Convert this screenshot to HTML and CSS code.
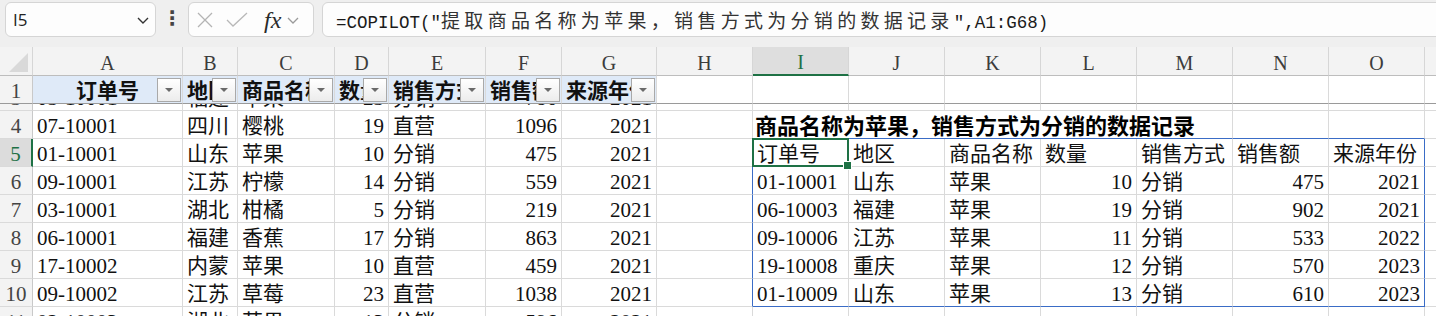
FILE: index.html
```html
<!DOCTYPE html>
<html lang="zh-CN">
  <head>
    <meta charset="UTF-8" />
    <meta name="viewport" content="width=device-width, initial-scale=1.0" />

    <title>COPILOT 筛选</title>

    <link rel="stylesheet" href="styles.css">
  </head>
  <body>
    <!-- formula bar -->
    <div class="formula-bar">
      <div class="name-box">
        <span>I5</span>
        <svg width="14" height="10" viewBox="0 0 14 10"><path d="M2 3 L7 8 L12 3" fill="none" stroke="#333" stroke-width="1.4"/></svg>
      </div>
      <div class="bar-dots">⋮</div>
      <div class="fx-box">
        <svg width="18" height="18" viewBox="0 0 18 18"><path d="M2 2 L16 16 M16 2 L2 16" stroke="#b4b4b4" stroke-width="1.3"/></svg>
        <svg width="22" height="18" viewBox="0 0 22 18"><path d="M1 9 L7 15 L21 2" fill="none" stroke="#b8b8b8" stroke-width="1.3"/></svg>
        <span class="fx">fx</span>
        <svg width="14" height="10" viewBox="0 0 14 10"><path d="M2 3 L7 8 L12 3" fill="none" stroke="#9a9a9a" stroke-width="1.3"/></svg>
      </div>
      <div class="formula">=COPILOT("<span class="cjk">提取商品名称为苹果，销售方式为分销的数据记录</span>",A1:G68)</div>
    </div>

    <!-- sheet -->
    <table class="sheet">
      <colgroup>
        <col class="w-rh"><col class="w-a"><col class="w-b"><col class="w-c"><col class="w-d"><col class="w-e"><col class="w-f"><col class="w-g">
        <col class="w-96"><col class="w-96"><col class="w-96"><col class="w-96"><col class="w-96"><col class="w-96"><col class="w-96"><col class="w-96">
      </colgroup>
      <tr class="col-head">
        <th class="corner"><span class="corner-tri"></span></th>
        <th>A</th><th>B</th><th>C</th><th>D</th><th>E</th><th>F</th><th>G</th>
        <th>H</th><th class="sel">I</th><th>J</th><th>K</th><th>L</th><th>M</th><th>N</th><th>O</th><th>P</th>
      </tr>

      <tr class="frozen">
        <td class="rh">1</td>
        <td class="hd center">订单号<span class="drop"></span></td>
        <td class="hd">地区<span class="drop"></span></td>
        <td class="hd">商品名称<span class="drop"></span></td>
        <td class="hd">数量<span class="drop"></span></td>
        <td class="hd">销售方式<span class="drop"></span></td>
        <td class="hd">销售额<span class="drop"></span></td>
        <td class="hd">来源年份<span class="drop"></span></td>
        <td></td><td></td><td></td><td></td><td></td><td></td><td></td><td></td><td></td>
      </tr>

      <tr class="sliver">
        <td class="rh"><div class="clip mid">3</div></td>
        <td><div class="clip">05-10001</div></td>
        <td><div class="clip">福建</div></td>
        <td><div class="clip">苹果</div></td>
        <td><div class="clip right">23</div></td>
        <td><div class="clip">分销</div></td>
        <td><div class="clip right">786</div></td>
        <td><div class="clip right">2021</div></td>
        <td></td><td></td><td></td><td></td><td></td><td></td><td></td><td></td><td></td>
      </tr>

      <tr>
        <td class="rh">4</td>
        <td>07-10001</td><td>四川</td><td>樱桃</td><td class="num">19</td><td>直营</td><td class="num">1096</td><td class="num">2021</td>
        <td></td>
        <td class="title box-t" colspan="5">商品名称为苹果，销售方式为分销的数据记录</td>
        <td class="box-t"></td><td class="box-t"></td><td></td>
      </tr>

      <tr>
        <td class="rh rh-sel">5</td>
        <td>01-10001</td><td>山东</td><td>苹果</td><td class="num">10</td><td>分销</td><td class="num">475</td><td class="num">2021</td>
        <td class="box-l"></td>
        <td class="active">订单号<span class="handle"></span></td><td>地区</td><td>商品名称</td><td>数量</td><td>销售方式</td><td>销售额</td><td class="box-r">来源年份</td>
        <td></td>
      </tr>

      <tr>
        <td class="rh">6</td>
        <td>09-10001</td><td>江苏</td><td>柠檬</td><td class="num">14</td><td>分销</td><td class="num">559</td><td class="num">2021</td>
        <td class="box-l"></td>
        <td>01-10001</td><td>山东</td><td>苹果</td><td class="num">10</td><td>分销</td><td class="num">475</td><td class="num box-r">2021</td>
        <td></td>
      </tr>

      <tr>
        <td class="rh">7</td>
        <td>03-10001</td><td>湖北</td><td>柑橘</td><td class="num">5</td><td>分销</td><td class="num">219</td><td class="num">2021</td>
        <td class="box-l"></td>
        <td>06-10003</td><td>福建</td><td>苹果</td><td class="num">19</td><td>分销</td><td class="num">902</td><td class="num box-r">2021</td>
        <td></td>
      </tr>

      <tr>
        <td class="rh">8</td>
        <td>06-10001</td><td>福建</td><td>香蕉</td><td class="num">17</td><td>分销</td><td class="num">863</td><td class="num">2021</td>
        <td class="box-l"></td>
        <td>09-10006</td><td>江苏</td><td>苹果</td><td class="num">11</td><td>分销</td><td class="num">533</td><td class="num box-r">2022</td>
        <td></td>
      </tr>

      <tr>
        <td class="rh">9</td>
        <td>17-10002</td><td>内蒙</td><td>苹果</td><td class="num">10</td><td>直营</td><td class="num">459</td><td class="num">2021</td>
        <td class="box-l"></td>
        <td>19-10008</td><td>重庆</td><td>苹果</td><td class="num">12</td><td>分销</td><td class="num">570</td><td class="num box-r">2023</td>
        <td></td>
      </tr>

      <tr>
        <td class="rh">10</td>
        <td>09-10002</td><td>江苏</td><td>草莓</td><td class="num">23</td><td>直营</td><td class="num">1038</td><td class="num">2021</td>
        <td class="box-l"></td>
        <td class="box-b">01-10009</td><td class="box-b">山东</td><td class="box-b">苹果</td><td class="num box-b">13</td><td class="box-b">分销</td><td class="num box-b">610</td><td class="num box-b box-r">2023</td>
        <td></td>
      </tr>

      <tr>
        <td class="rh">11</td>
        <td>02-10003</td><td>湖北</td><td>苹果</td><td class="num">13</td><td>分销</td><td class="num">596</td><td class="num">2021</td>
        <td></td><td></td><td></td><td></td><td></td><td></td><td></td><td></td><td></td>
      </tr>
    </table>
  </body>
</html>
```

FILE: styles.css
```css
body {
  margin: 0;
  width: 1436px;
  height: 316px;
  overflow: hidden;
  background-color: #ffffff;
  font-family: "Liberation Serif", "Noto Sans CJK SC", serif;
  color: #111;
}

/* formula bar */
.formula-bar {
  display: flex;
  align-items: flex-start;
  height: 47px;
  padding: 2px 0 0 5px;
  box-sizing: border-box;
  background-color: #efefef;
}
.name-box,
.fx-box,
.formula {
  height: 35px;
  box-sizing: border-box;
  border: 1px solid #d5d5d5;
  border-radius: 6px;
  background-color: #fdfdfd;
}
.name-box {
  width: 151px;
  display: flex;
  align-items: center;
  justify-content: space-between;
  padding: 0 5px 0 7px;
  font-family: "Open Sans", "Noto Sans", sans-serif;
  font-size: 17px;
  color: #222;
}
.bar-dots {
  width: 32px;
  text-align: center;
  font-family: "DejaVu Sans", sans-serif;
  font-size: 20px;
  font-weight: bold;
  line-height: 33px;
  color: #444;
}
.fx-box {
  width: 126px;
  display: flex;
  align-items: center;
  padding: 0 4px 0 7px;
}
.fx-box svg:nth-child(2) {
  margin-left: 12px;
}
.fx {
  margin-left: 16px;
  font-family: "Liberation Serif", serif;
  font-style: italic;
  font-size: 24px;
  line-height: 30px;
  color: #2a2a2a;
}
.fx-box svg:last-child {
  margin-left: 5px;
}
.formula {
  flex: 1;
  margin: 0 -12px 0 8px;
  padding-left: 13px;
  font-family: "Liberation Mono", monospace;
  font-size: 17.5px;
  line-height: 33px;
  color: #1a1a1a;
  white-space: nowrap;
  overflow: hidden;
}
.formula .cjk {
  font-family: "Noto Sans CJK SC", sans-serif;
  font-size: 19px;
  letter-spacing: 4.3px;
  color: #333;
}

/* sheet grid */
.sheet {
  border-collapse: separate;
  border-spacing: 0;
  table-layout: fixed;
  width: 1521px;
}
.w-rh { width: 33px; }
.w-a { width: 150px; }
.w-b { width: 55px; }
.w-c { width: 97px; }
.w-d { width: 54px; }
.w-e { width: 97px; }
.w-f { width: 76px; }
.w-g { width: 95px; }
.w-96 { width: 96px; }

.sheet th,
.sheet td {
  box-sizing: border-box;
  height: 28px;
  padding: 3px 4px 0;
  border-right: 1px solid #dadada;
  border-bottom: 1px solid #dadada;
  white-space: nowrap;
  overflow: hidden;
  text-align: left;
  font-size: 21px;
  font-weight: normal;
  line-height: 24px;
}

.col-head th {
  background-color: #f3f3f3;
  border-right-color: #d6d6d6;
  border-bottom-color: #bdbdbd;
  text-align: center;
  font-size: 20px;
  color: #3c3c3c;
}
.col-head th.sel {
  background-color: #dedede;
  color: #1e7145;
  border-bottom: 2px solid #1e7145;
}
.corner {
  position: relative;
}
.corner-tri {
  position: absolute;
  right: 4px;
  bottom: 3px;
  width: 0;
  height: 0;
  border-left: 19px solid transparent;
  border-bottom: 19px solid #d9d9d9;
}

.sheet td.rh {
  padding: 3px 0 0;
  background-color: #f3f3f3;
  border-right-color: #c9c9c9;
  text-align: center;
  font-size: 21px;
  color: #444;
}
.sheet td.rh-sel {
  background-color: #dcdcdc;
  color: #1e7145;
  border-right: 2px solid #1e7145;
}

/* frozen header row of the source table */
.frozen td {
  border-bottom-color: #9a9a9a;
}
.sheet td.hd {
  position: relative;
  background-color: #dfeaf8;
  font-weight: bold;
}
.sheet td.center {
  text-align: center;
}
.drop {
  position: absolute;
  top: 2px;
  right: 1px;
  width: 24px;
  height: 24px;
  box-sizing: border-box;
  border: 1px solid #a9a9a9;
  background: linear-gradient(#ffffff, #ececec);
}
.drop::after {
  content: "";
  position: absolute;
  left: 7px;
  top: 9px;
  border-left: 4px solid transparent;
  border-right: 4px solid transparent;
  border-top: 4px solid #6a6a6a;
}

/* clipped row under the freeze line */
.sheet .sliver td {
  height: 7px;
  padding-top: 0;
}
.clip {
  height: 6px;
  overflow: hidden;
  display: flex;
  align-items: flex-end;
  line-height: 24px;
}
.clip.right {
  justify-content: flex-end;
}
.clip.mid {
  justify-content: center;
}

.sheet td.num {
  text-align: right;
}

/* result block */
.sheet td.title {
  padding-left: 2px;
  padding-top: 0;
  font-family: "Noto Sans CJK SC", sans-serif;
  font-size: 22px;
  font-weight: bold;
  line-height: 25px;
  color: #000;
}
.sheet td.box-l {
  border-right-color: #3a6cc6;
}
.sheet td.box-r {
  border-right-color: #3a6cc6;
}
.sheet td.box-t {
  border-bottom-color: #3a6cc6;
}
.sheet td.box-b {
  border-bottom-color: #3a6cc6;
}
.sheet td.active {
  position: relative;
  overflow: visible;
}
.active::after {
  content: "";
  position: absolute;
  left: -1px;
  top: -1px;
  right: -1px;
  bottom: -1px;
  border: 2px solid #1e7145;
}
.handle {
  position: absolute;
  right: -4px;
  bottom: -4px;
  width: 7px;
  height: 7px;
  background-color: #1e7145;
  border: 1px solid #ffffff;
  z-index: 1;
}
```
